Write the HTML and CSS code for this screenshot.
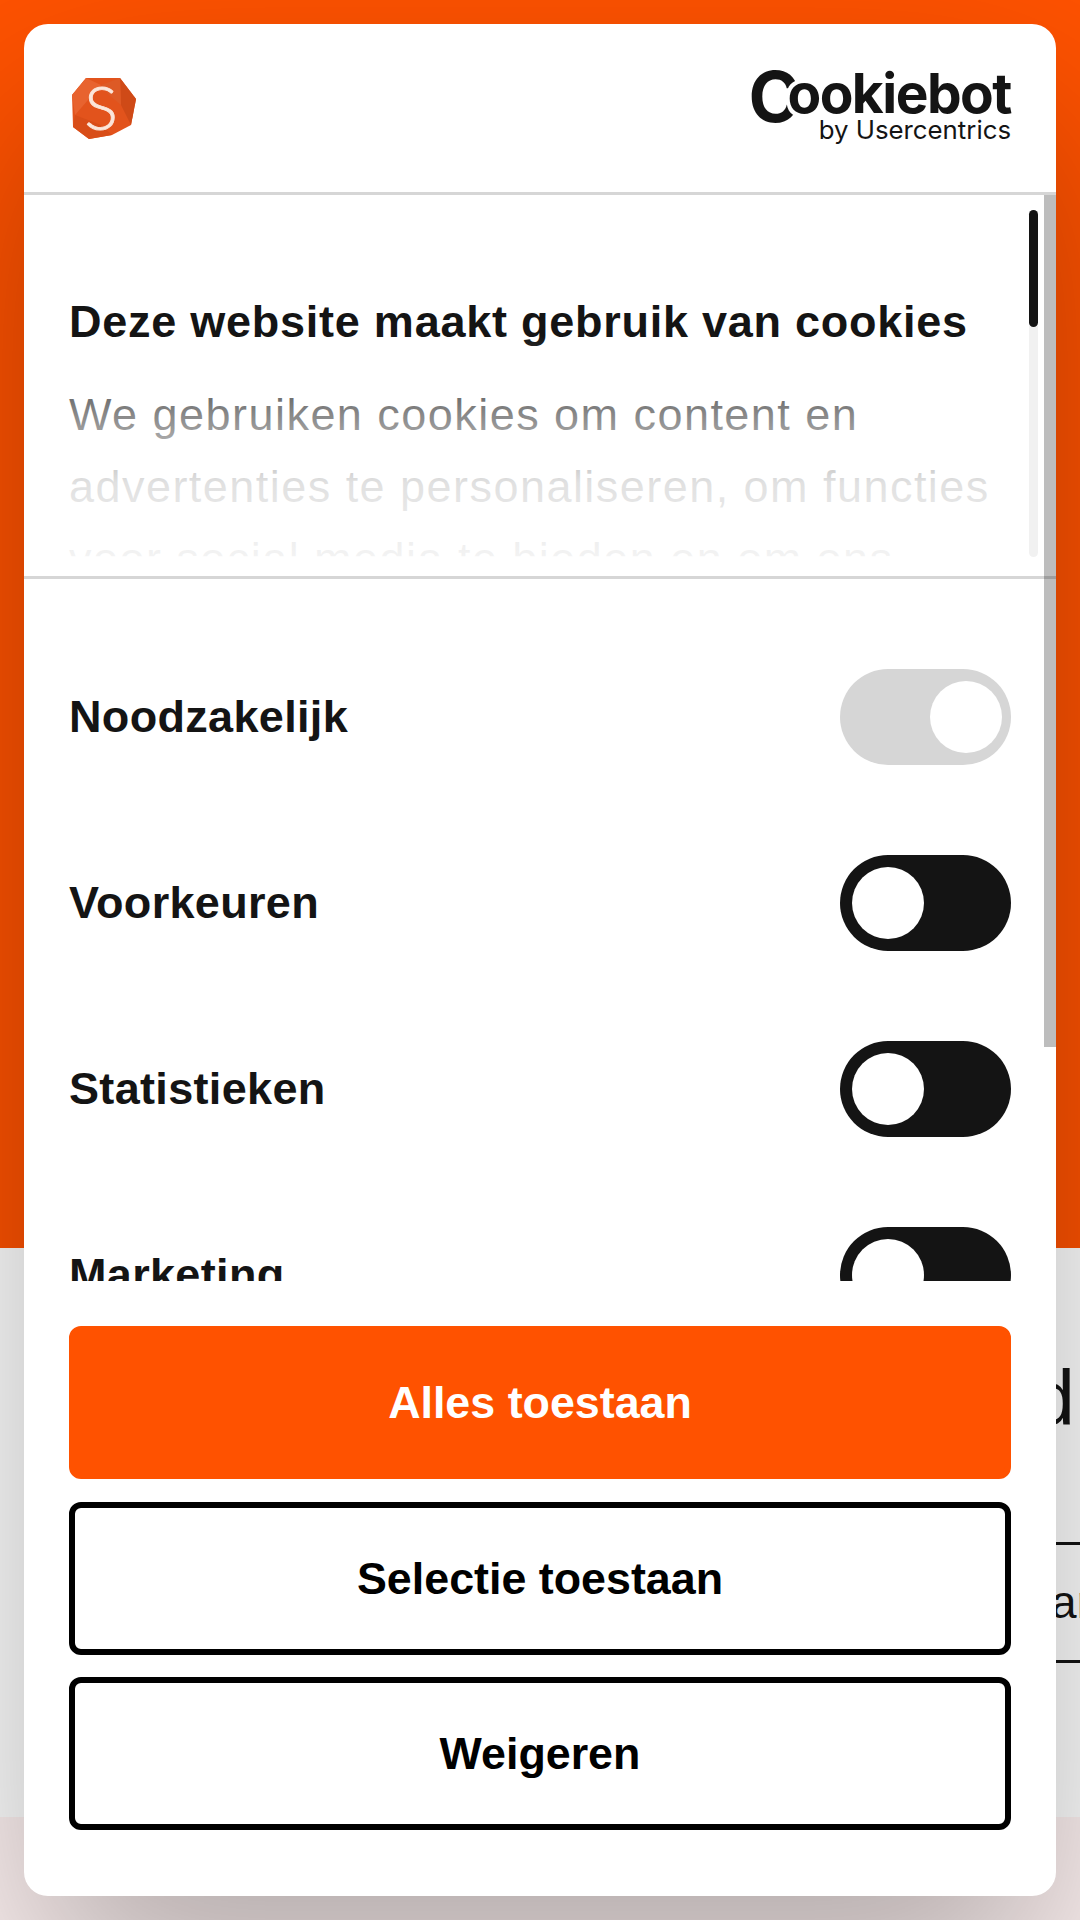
FILE: index.html
```html
<!DOCTYPE html>
<html lang="nl">
<head>
    <meta charset="UTF-8">
    <title>Deze website maakt gebruik van cookies</title>
    <link rel="stylesheet" href="styles.css">
</head>
<body>
    <div class="page">
        <div class="hero"></div>
        <div class="intro">
            <h2 class="intro-title">d</h2>
            <div class="intro-tabs"><span>ar</span></div>
        </div>
        <div class="foot"></div>
    </div>

    <div class="dialog">
        <div class="dialog-head">
            <svg class="brand" viewBox="0 0 66 64" width="66" height="64">
                <polygon points="15,1 49,1 65,22 60,48 41,58 18,62 2,50 1,18" fill="#e2531c"/>
                <polygon points="1,18 15,1 30,8 4,38" fill="#e8632f"/>
                <polygon points="49,1 65,22 60,48 50,28" fill="#cf4a17"/>
                <polygon points="2,50 4,38 30,48 41,58 18,62" fill="#d84d18"/>
                <polygon points="30,8 49,1 50,28 38,18" fill="#dd5a26"/>
                <text class="brand-letter" x="30" y="53" text-anchor="middle">S</text>
            </svg>
            <div class="bot">
                <div class="bot-name"><span class="bot-c">C</span><span class="bot-o">o</span>okiebot</div>
                <div class="bot-by">by Usercentrics</div>
            </div>
        </div>

        <div class="dialog-text">
            <h1>Deze website maakt gebruik van cookies</h1>
            <p>We gebruiken cookies om content en advertenties te personaliseren, om functies voor social media te bieden en om ons websiteverkeer te analyseren.</p>
            <div class="fade"></div>
            <div class="track"><div class="thumb"></div></div>
        </div>

        <div class="toggles">
            <div class="toggle-row">
                <span>Noodzakelijk</span>
                <div class="toggle on"><i></i></div>
            </div>
            <div class="toggle-row">
                <span>Voorkeuren</span>
                <div class="toggle"><i></i></div>
            </div>
            <div class="toggle-row">
                <span>Statistieken</span>
                <div class="toggle"><i></i></div>
            </div>
            <div class="toggle-row">
                <span>Marketing</span>
                <div class="toggle"><i></i></div>
            </div>
        </div>

        <div class="buttons">
            <button class="btn btn-main">Alles toestaan</button>
            <button class="btn">Selectie toestaan</button>
            <button class="btn">Weigeren</button>
        </div>

        <div class="dialog-bar"></div>
    </div>
</body>
</html>
```

FILE: styles.css
```css
html, body, h1, h2, p { margin: 0; padding: 0; }
body {
    position: relative;
    width: 1080px;
    height: 1920px;
    overflow: hidden;
    font-family: "Liberation Sans", Arial, sans-serif;
    color: #141414;
}

/* page behind the dialog */
.page {
    display: flex;
    flex-direction: column;
    height: 1920px;
}
.hero {
    height: 1248px;
    background-color: #ff5200;
}
.intro {
    height: 569px;
    background-color: #fff;
}
.intro-title {
    height: 294px;
    padding: 100px 5px 0 0;
    box-sizing: border-box;
    font-size: 78px;
    line-height: 100px;
    font-weight: 400;
    text-align: right;
}
.intro-tabs {
    height: 121px;
    box-sizing: border-box;
    margin: 0 -12px 0 200px;
    border-top: 3px solid #141414;
    border-bottom: 3px solid #141414;
    font-size: 46px;
    line-height: 115px;
    text-align: right;
}
.foot {
    flex: 1;
    background-color: #fff3f3;
}

/* dialog */
.dialog {
    position: absolute;
    top: 24px;
    left: 24px;
    display: flex;
    flex-direction: column;
    width: 1032px;
    height: 1872px;
    background-color: #fff;
    border-radius: 24px;
    box-shadow: 0 96px 204px rgba(0, 0, 0, .3);
    overflow: hidden;
}
.dialog-head {
    display: flex;
    align-items: center;
    justify-content: space-between;
    flex: none;
    height: 168px;
    padding: 0 45px;
    box-sizing: content-box;
    border-bottom: 3px solid #d6d6d6;
}
.brand { margin: 2px 0 0 2px; }
.brand-letter {
    font-family: Lato, sans-serif;
    font-size: 62px;
    font-weight: 300;
    fill: #fbe6da;
    stroke: #fbe6da;
    stroke-width: .8px;
}
.bot {
    display: flex;
    flex-direction: column;
    align-items: flex-end;
}
.bot-name {
    font-family: Inter, sans-serif;
    font-size: 55px;
    font-weight: 700;
    line-height: 40px;
    letter-spacing: -1.5px;
    color: #141414;
}
.bot-c {
    font-size: 70px;
    line-height: 0;
    letter-spacing: -13px;
    vertical-align: -9px;
}
/* white edge opens the mouth of the big C round the first o */
.bot-o {
    text-shadow: -3px 0 0 #fff, -3px -3px 0 #fff, -3px 3px 0 #fff, 0 -4px 0 #fff, 0 4px 0 #fff;
}
.bot-by {
    margin-top: 3px;
    font-family: Inter, sans-serif;
    font-size: 25.8px;
    line-height: 28px;
    color: #141414;
}

.dialog-text {
    position: relative;
    flex: none;
    height: 384px;
    padding: 97px 45px 0;
    box-sizing: border-box;
    border-bottom: 3px solid #d6d6d6;
    overflow: hidden;
}
.dialog-text h1 {
    font-size: 45px;
    line-height: 60px;
    font-weight: 700;
    letter-spacing: .75px;
}
.dialog-text p {
    margin-top: 27px;
    font-size: 45px;
    line-height: 72px;
    letter-spacing: 1.46px;
    color: #141414;
}
.fade {
    position: absolute;
    left: 0;
    right: 0;
    bottom: 0;
    height: 240px;
    background: linear-gradient(to bottom, rgba(255, 255, 255, 0), rgba(255, 255, 255, .47) 31%, rgba(255, 255, 255, .87) 61%, rgba(255, 255, 255, .95) 91.5%, #fff 92%);
}
.track {
    position: absolute;
    top: 15px;
    left: 1005px;
    width: 9px;
    height: 347px;
    border-radius: 5px;
    background-color: #f1f1f1;
}
.thumb {
    height: 117px;
    border-radius: 5px;
    background-color: #141414;
}

.toggles {
    display: flex;
    flex-direction: column;
    flex: none;
    gap: 90px;
    height: 702px;
    padding: 90px 45px 0;
    box-sizing: border-box;
    overflow: hidden;
}
.toggle-row {
    display: flex;
    align-items: center;
    justify-content: space-between;
    flex: none;
    height: 96px;
    font-size: 45px;
    font-weight: 700;
    letter-spacing: .33px;
}
.toggle {
    display: flex;
    align-items: center;
    width: 171px;
    height: 96px;
    padding: 0 12px;
    box-sizing: border-box;
    border-radius: 48px;
    background-color: #141414;
}
.toggle i {
    width: 72px;
    height: 72px;
    border-radius: 50%;
    background-color: #fff;
}
.toggle.on {
    justify-content: flex-end;
    padding-right: 9px;
    background-color: #d6d6d6;
}

.buttons {
    display: flex;
    flex-direction: column;
    flex: none;
    gap: 22.5px;
    margin-top: 45px;
    padding: 0 45px;
}
.btn {
    height: 153px;
    padding: 0;
    box-sizing: border-box;
    border: 6px solid #000;
    border-radius: 12px;
    background-color: #fff;
    font-family: "Liberation Sans", Arial, sans-serif;
    font-size: 44.8px;
    font-weight: 700;
    color: #000;
}
.btn-main {
    border-color: #ff5200;
    background-color: #ff5200;
    color: #fff;
}

.dialog-bar {
    position: absolute;
    top: 171px;
    right: 0;
    width: 12px;
    height: 852px;
    background-color: rgba(0, 0, 0, .26);
}
```
